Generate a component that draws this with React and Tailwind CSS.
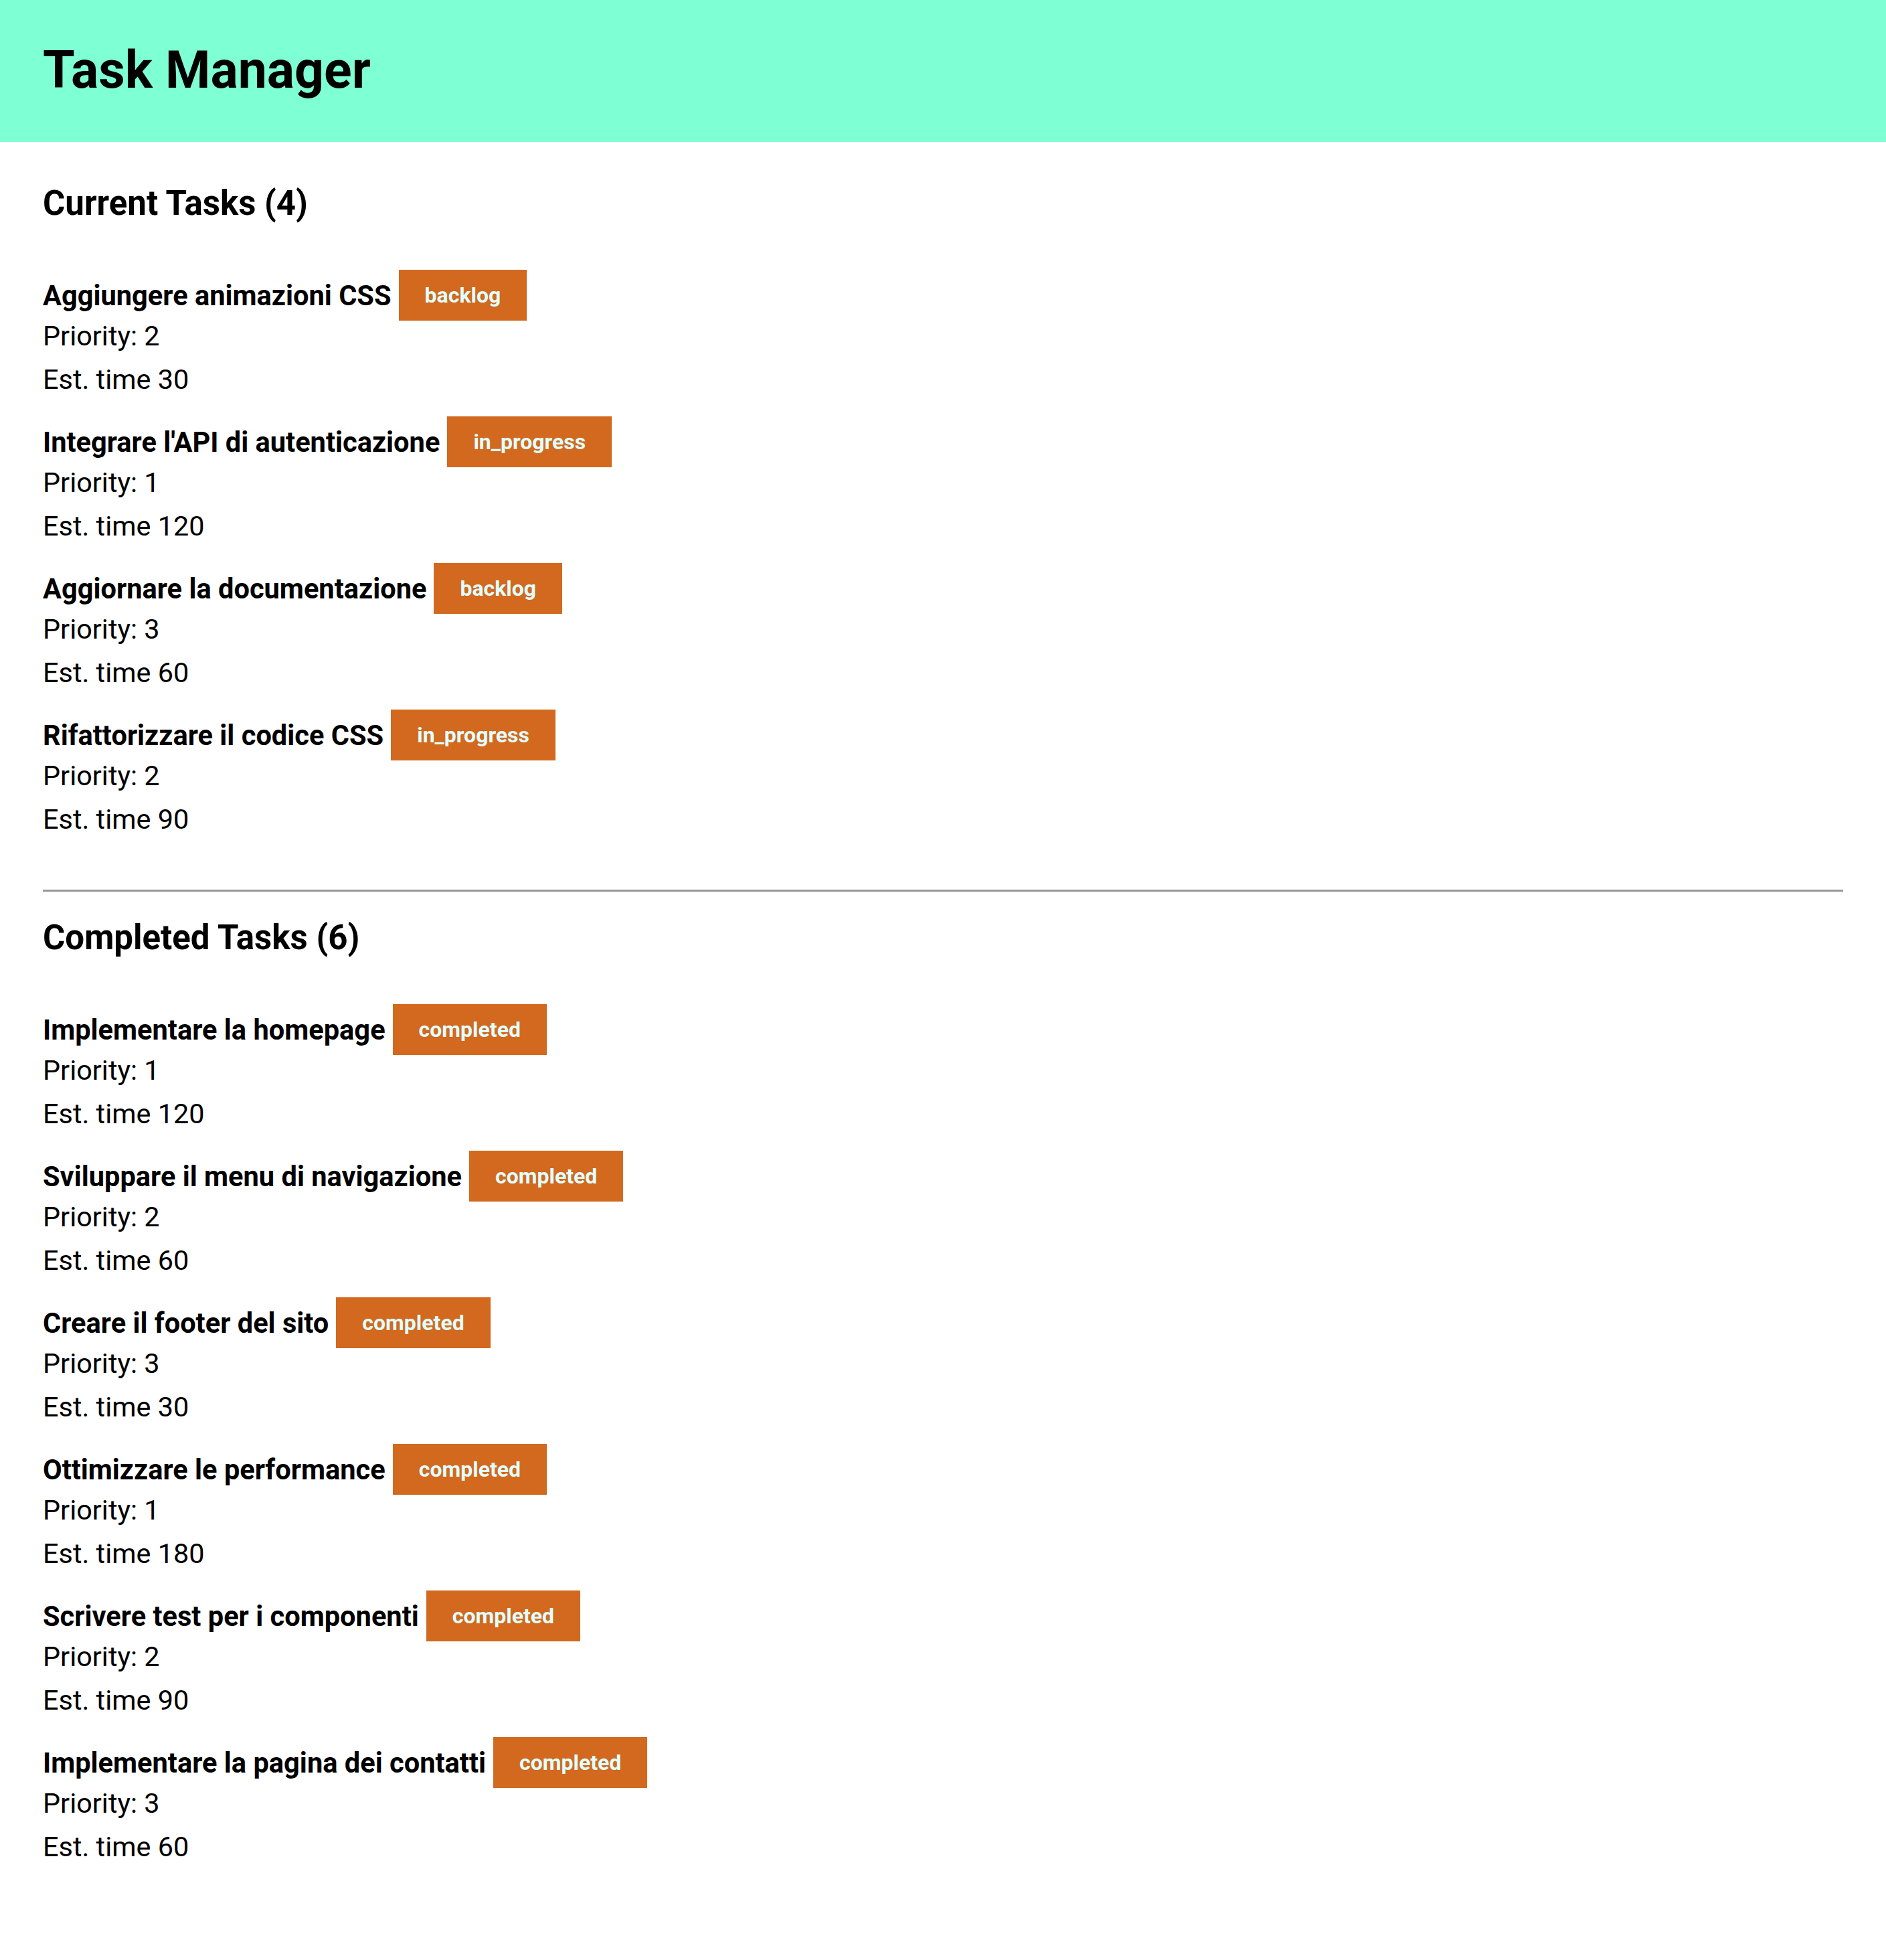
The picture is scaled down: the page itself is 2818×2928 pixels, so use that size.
import React from 'react';

const currentTasks = [
  { title: 'Aggiungere animazioni CSS', status: 'backlog', priority: 2, time: 30 },
  { title: "Integrare l'API di autenticazione", status: 'in_progress', priority: 1, time: 120 },
  { title: 'Aggiornare la documentazione', status: 'backlog', priority: 3, time: 60 },
  { title: 'Rifattorizzare il codice CSS', status: 'in_progress', priority: 2, time: 90 },
];

const completedTasks = [
  { title: 'Implementare la homepage', status: 'completed', priority: 1, time: 120 },
  { title: 'Sviluppare il menu di navigazione', status: 'completed', priority: 2, time: 60 },
  { title: 'Creare il footer del sito', status: 'completed', priority: 3, time: 30 },
  { title: 'Ottimizzare le performance', status: 'completed', priority: 1, time: 180 },
  { title: 'Scrivere test per i componenti', status: 'completed', priority: 2, time: 90 },
  { title: 'Implementare la pagina dei contatti', status: 'completed', priority: 3, time: 60 },
];

function TaskItem({ task }) {
  return (
    <li>
      <div className="flex items-center h-[76px] gap-[11px]">
        <span className="text-[41.6px] font-bold leading-[47px]">{task.title}</span>
        <span className="bg-[#D2691E] text-[#E0FFFF] text-[32px] font-bold leading-[38px] px-[39px] py-[19px]">
          {task.status}
        </span>
      </div>
      <p className="text-[41.4px] leading-[47px]">Priority: {task.priority}</p>
      <p className="text-[41.4px] leading-[47px] mt-[18px]">Est. time {task.time}</p>
    </li>
  );
}

function TaskList({ title, tasks }) {
  return (
    <section>
      <h2 className="text-[51px] font-bold leading-[60px]">{title}</h2>
      <ul className="mt-[69px] flex flex-col gap-[31px]">
        {tasks.map((t, i) => (
          <TaskItem key={i} task={t} />
        ))}
      </ul>
    </section>
  );
}

export default function App() {
  return (
    <div className="min-h-[2928px] bg-white text-black font-['Roboto',sans-serif]">
      {/* Header */}
      <header className="bg-[#7FFFD4] px-[64px] pt-[60px] pb-[61px]">
        <h1 className="text-[77px] font-bold leading-[91px]">Task Manager</h1>
      </header>

      <main className="px-[64px] pt-[62px]">
        <TaskList title="Current Tasks (4)" tasks={currentTasks} />

        <div className="mt-[81px] border-t-[3px] border-[#999999] border-b border-b-[#eeeeee]" />

        <div className="mt-[38px]">
          <TaskList title="Completed Tasks (6)" tasks={completedTasks} />
        </div>
      </main>
    </div>
  );
}
